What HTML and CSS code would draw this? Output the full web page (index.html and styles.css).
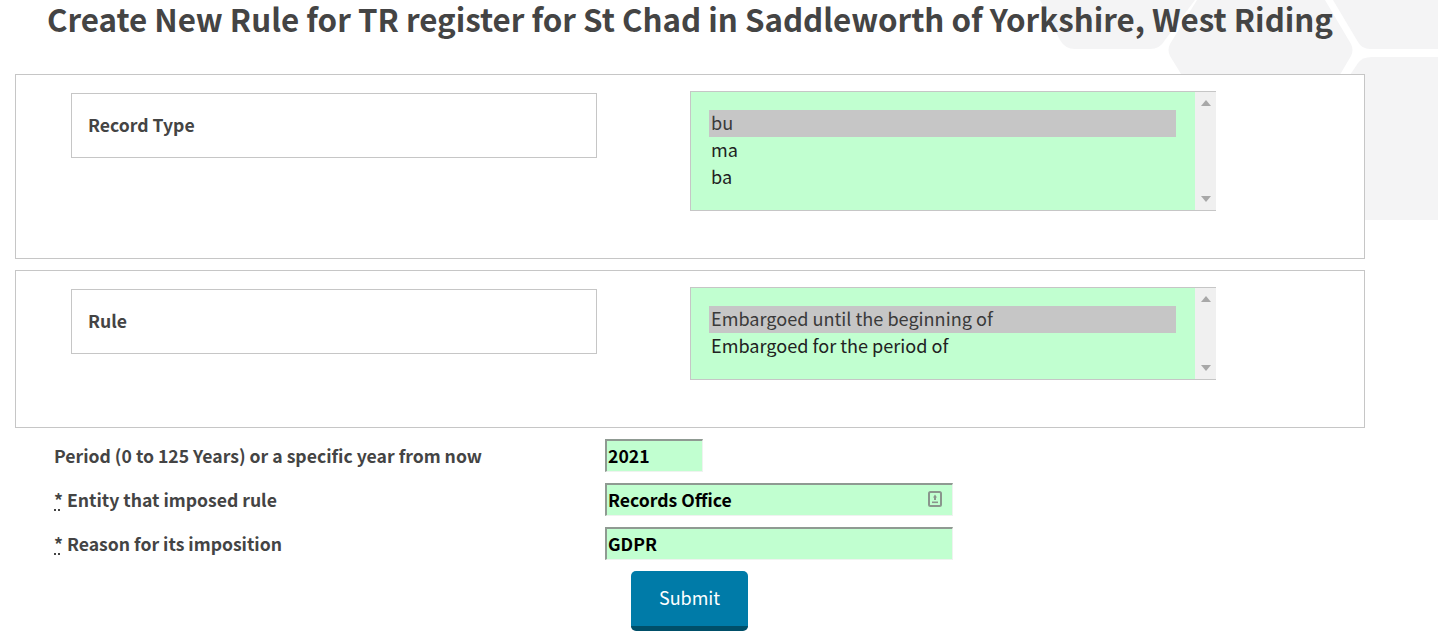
FILE: index.html
```html
<!DOCTYPE html>
<html>
	<head>
		<meta charset="UTF-8">
		<title>Create New Rule</title>
		<link rel="stylesheet" href="styles.css">
	</head>
	<body>
		<svg class="hexes" width="438" height="240" viewBox="1000 0 438 240" aria-hidden="true">
			<path d="M1040 0H1195L1165 40Q1160 49 1150 49H1075Q1065 49 1060 40Z"/>
			<path d="M1197 0H1325L1351 44Q1354 50 1351 56L1325 100H1197L1170 56Q1167 50 1170 44Z"/>
			<path d="M1333 0H1438V49H1370Q1362 49 1358 42Z"/>
			<path d="M1372 57H1438V220H1340V90L1358 63Q1362 57 1372 57Z"/>
		</svg>
		<div id="wrap">
			<h1>Create New Rule for TR register for St Chad in Saddleworth of Yorkshire, West Riding</h1>
			<form>
				<fieldset class="box box-type">
					<div class="label-box">Record Type</div>
					<div class="listbox list-type">
						<ul>
							<li class="selected">bu</li>
							<li>ma</li>
							<li>ba</li>
						</ul>
						<div class="scrollbar"><span class="up"></span><span class="down"></span></div>
					</div>
				</fieldset>
				<fieldset class="box box-rule">
					<div class="label-box">Rule</div>
					<div class="listbox list-rule">
						<ul>
							<li class="selected">Embargoed until the beginning of</li>
							<li>Embargoed for the period of</li>
						</ul>
						<div class="scrollbar"><span class="up"></span><span class="down"></span></div>
					</div>
				</fieldset>
				<div class="row">
					<label for="period">Period (0 to 125 Years) or a specific year from now</label>
					<input id="period" class="short" type="text" value="2021">
				</div>
				<div class="row">
					<label for="entity"><abbr title="required">*</abbr> Entity that imposed rule</label>
					<div class="field">
						<input id="entity" type="text" value="Records Office">
						<svg class="contact" width="14" height="16" viewBox="0 0 14 16" aria-hidden="true">
							<rect x="1" y="1" width="12" height="14" rx="1.5" fill="none" stroke="#8a958d" stroke-width="2"/>
							<path d="M7 3.5L9 6.5H8V9H6V6.5H5Z" fill="#8a958d"/>
							<rect x="4" y="10.5" width="6" height="1.6" fill="#8a958d"/>
						</svg>
					</div>
				</div>
				<div class="row">
					<label for="reason"><abbr title="required">*</abbr> Reason for its imposition</label>
					<input id="reason" type="text" value="GDPR">
				</div>
				<button type="button" class="submit">Submit</button>
			</form>
		</div>
	</body>
</html>
```

FILE: styles.css
```css
* {
	box-sizing: border-box;
}
body {
	margin: 0;
	background: #fff;
	color: #444;
	font-family: "Noto Sans CJK JP", "Source Sans Pro", "Noto Sans", sans-serif;
	position: relative;
}
ul {
	margin: 0;
	padding: 0;
	list-style: none;
}

.hexes {
	position: absolute;
	top: 0;
	right: 0;
	fill: #f4f4f5;
}
#wrap {
	position: relative;
	padding: 0 73px 0 15px;
}

h1 {
	margin: 0;
	height: 74px;
	padding-top: 1px;
	font-size: 31.3px;
	line-height: 36px;
	font-weight: 700;
	text-align: center;
	white-space: nowrap;
}

.box {
	display: flex;
	margin: 0 0 11px;
	padding: 0;
	border: 1px solid #c6c6c6;
	background: #fff;
	min-width: 0;
}
.box-type {
	height: 185px;
}
.box-rule {
	height: 158px;
}
.label-box {
	width: 526px;
	height: 65px;
	margin: 18px 93px 0 55px;
	padding-left: 16px;
	border: 1px solid #c6c6c6;
	font-size: 17.6px;
	line-height: 61px;
	font-weight: 700;
}
.listbox {
	display: flex;
	width: 526px;
	margin-top: 16px;
	border-top: 1px solid #c6c6c6;
	border-bottom: 1px solid #c6c6c6;
	border-left: 1px solid #c6c6c6;
	font-size: 18.1px;
	line-height: 25px;
	color: #222;
}
.list-type {
	height: 120px;
}
.list-rule {
	height: 93px;
}
.listbox ul {
	flex: 1;
	padding: 18px 19px 0 18px;
	background: #c1ffd0;
}
.listbox li {
	height: 27px;
	padding-left: 2px;
}
.listbox li.selected {
	background: #c6c6c6;
	color: #3a3a3a;
}
.scrollbar {
	display: flex;
	flex-direction: column;
	justify-content: space-between;
	align-items: center;
	width: 21px;
	padding: 8px 0;
	background: #f0f0f0;
}
.scrollbar span {
	width: 0;
	height: 0;
	border-left: 5px solid transparent;
	border-right: 5px solid transparent;
}
.scrollbar .up {
	border-bottom: 6px solid #a8a8a8;
}
.scrollbar .down {
	border-top: 6px solid #a8a8a8;
}

.row {
	display: flex;
	align-items: center;
	height: 33px;
	margin-bottom: 11px;
}
.row label {
	width: 590px;
	padding: 0 0 0 39px;
	font-size: 17.6px;
	line-height: 29px;
	font-weight: 700;
}
abbr {
	text-decoration: underline dotted;
	text-underline-offset: 3px;
}
.field {
	position: relative;
	width: 348px;
}
input {
	display: block;
	width: 348px;
	height: 33px;
	padding: 0 0 2px 1px;
	border-style: solid;
	border-width: 2px 1px 1px 2px;
	border-color: #8f9a92 #eef3ef #eef3ef #8f9a92;
	background: #c1ffd0;
	color: #000;
	font-family: inherit;
	font-size: 17.6px;
	font-weight: 700;
	outline: none;
}
input.short {
	width: 98px;
}
.contact {
	position: absolute;
	top: 8px;
	right: 11px;
}

.submit {
	display: block;
	width: 117px;
	height: 60px;
	margin-left: 616px;
	padding: 0 0 4px;
	border: 0;
	border-bottom: 5px solid #004f69;
	border-radius: 5px;
	background: #007ba8;
	color: #fff;
	font-family: inherit;
	font-size: 18px;
	cursor: pointer;
}
```
